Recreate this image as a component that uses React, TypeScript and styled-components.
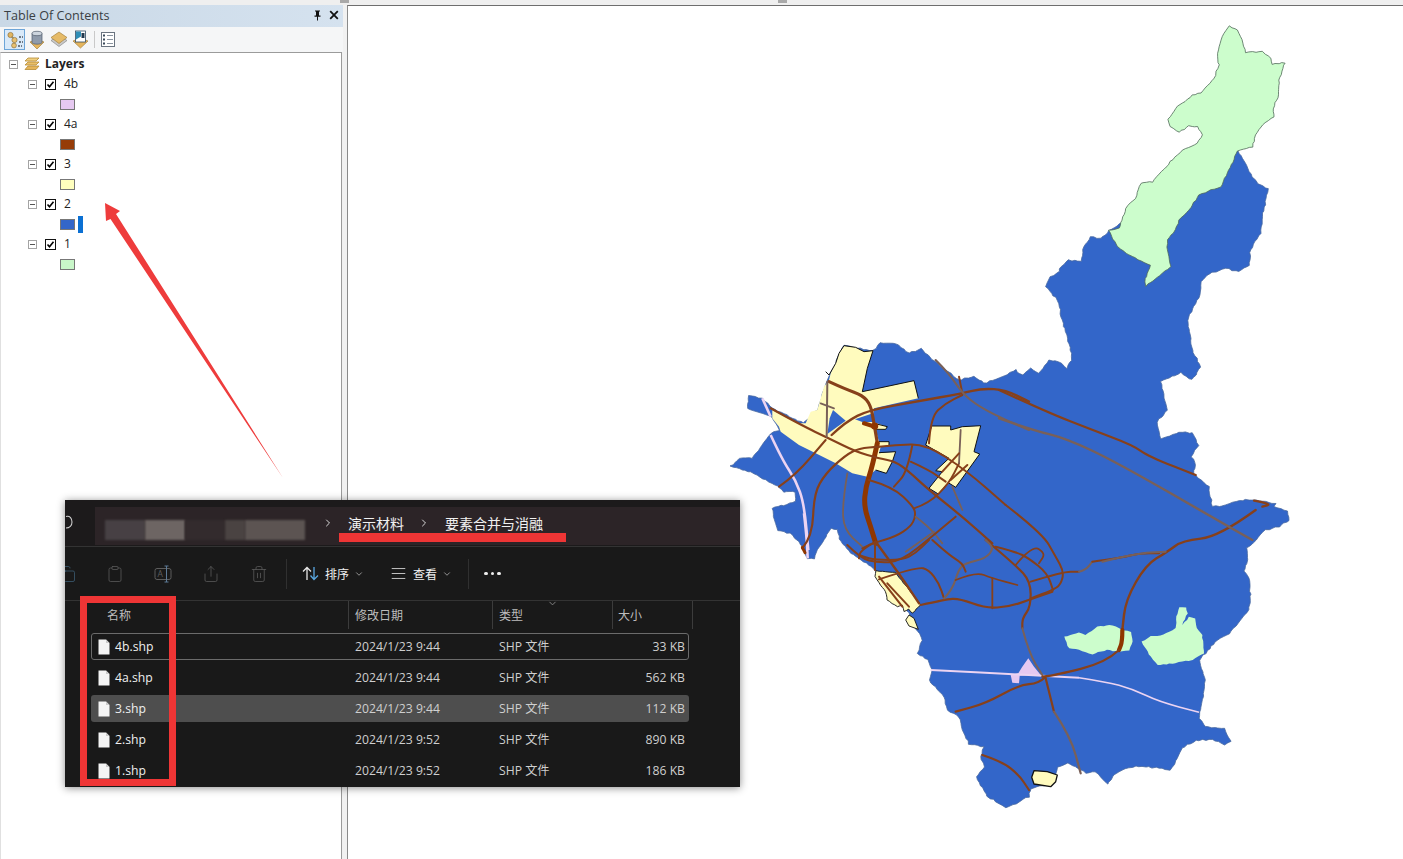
import React from "react";
import styled, { createGlobalStyle } from "styled-components";
import { Clipboard, Trash2, AlignJustify, ChevronDown, ChevronRight, Share, Copy } from "lucide-react";

const Global = createGlobalStyle`
  html, body { margin: 0; padding: 0; background: #f0f0f0; overflow: hidden; }
  #root { width: 1403px; height: 859px; }
`;

const CJK = `"Open Sans", "Noto Sans CJK SC", sans-serif`;

const Page = styled.div`
  position: relative;
  width: 1403px;
  height: 859px;
  overflow: hidden;
  display: flex;
  flex-direction: column;
  background: #f0f0f0;
  font-family: ${CJK};
`;
const TopStrip = styled.div`
  height: 5px;
  flex: none;
  background: #efefef;
  display: flex;
  padding-left: 340px;
  gap: 429px;
`;
const Gripper = styled.div`
  width: 9px;
  height: 3px;
  background: #a9a9a9;
`;
const Main = styled.div`
  flex: 1;
  display: flex;
  min-height: 0;
`;
const Sidebar = styled.aside`
  width: 343px;
  flex: none;
  display: flex;
  flex-direction: column;
`;
const Splitter = styled.div`
  width: 4px;
  flex: none;
  background: #f1f1f1;
`;
const TitleBar = styled.div`
  height: 22px;
  box-sizing: border-box;
  flex: none;
  display: flex;
  align-items: center;
  padding: 0 3px 2px 4px;
  background: linear-gradient(90deg, #c9d8e6, #d5e2ef);
  color: #3a3f44;
  font: 12.6px "Open Sans", sans-serif;
`;
const TitleText = styled.span`
  flex: 1;
`;
const TitleIcons = styled.span`
  display: flex;
  align-items: center;
  gap: 7px;
  margin-right: 1px;
`;
const ToolRow = styled.div`
  height: 25px;
  flex: none;
  display: flex;
  align-items: center;
  padding-left: 4px;
  gap: 1px;
  background: #f5f6f7;
`;
const ToolButton = styled.button<{ $on?: boolean }>`
  width: 21px;
  height: 21px;
  padding: 0;
  display: flex;
  align-items: center;
  justify-content: center;
  border: 1px solid ${(p) => (p.$on ? "#6da5d8" : "transparent")};
  background: ${(p) => (p.$on ? "#d9e9f8" : "transparent")};
`;
const ToolSep = styled.div`
  width: 1px;
  height: 17px;
  background: #c9c9c9;
  margin: 0 1px 0 2px;
`;
const Tree = styled.div`
  flex: 1;
  background: #fff;
  border: 1px solid #9b9b9b;
  border-left: 1px solid #e0e0e0;
  border-bottom: none;
  margin-right: 1px;
  padding-top: 1px;
`;
const TreeRow = styled.div<{ $indent: number }>`
  height: 20px;
  display: flex;
  align-items: center;
  padding-left: ${(p) => p.$indent}px;
  color: #222;
  font: 12px "Open Sans", sans-serif;
`;
const Expander = styled.span`
  width: 9px;
  height: 9px;
  box-sizing: border-box;
  border: 1px solid #a4a4a4;
  position: relative;
  flex: none;
  &::after {
    content: "";
    position: absolute;
    left: 1px;
    right: 1px;
    top: 3px;
    height: 1px;
    background: #555;
  }
`;
const LayerGlyph = styled.span`
  display: flex;
  margin-left: 6px;
`;
const Bold = styled.span`
  font-weight: 700;
  margin-left: 5px;
  position: relative;
  top: -1px;
`;
const LayerName = styled.span`
  margin-left: 8px;
  position: relative;
  top: -1px;
`;
const Check = styled.span`
  margin-left: 8px;
  width: 11px;
  height: 11px;
  box-sizing: border-box;
  border: 1px solid #111;
  display: flex;
  background: #fff;
  flex: none;
`;
const Swatch = styled.span<{ $c: string }>`
  width: 15px;
  height: 11px;
  box-sizing: border-box;
  background: ${(p) => p.$c};
  border: 1px solid #777;
  flex: none;
`;
const Caret = styled.span`
  width: 5px;
  height: 17px;
  margin-left: 3px;
  background: #0b70d3;
`;

const MapCanvas = styled.main`
  flex: 1;
  min-width: 0;
  background: #fff;
  border-left: 1px solid #8a8a8a;
  border-top: 1px solid #6e6e6e;
`;
const MapSvg = styled.svg`
  display: block;
`;

const Overlay = styled.svg`
  position: absolute;
  left: 0;
  top: 0;
  pointer-events: none;
`;

const Explorer = styled.section`
  position: absolute;
  left: 65px;
  top: 500px;
  width: 675px;
  height: 287px;
  background: #191919;
  box-shadow: 0 1px 8px rgba(0, 0, 0, 0.45);
  color: #e6e6e6;
  font: 12px ${CJK};
  overflow: hidden;
  display: flex;
  flex-direction: column;
`;
const AddressBar = styled.div`
  height: 47px;
  flex: none;
  display: flex;
  align-items: center;
  border-bottom: 1px solid #333;
  background: #1c1a1b;
  box-sizing: border-box;
`;
const Refresh = styled.div`
  width: 30px;
  flex: none;
  display: flex;
  margin-top: -2px;
`;
const Crumbs = styled.div`
  flex: 1;
  height: 38px;
  margin-top: 6px;
  box-sizing: border-box;
  background: #2c2427;
  display: flex;
  align-items: center;
  padding: 0 0 6px 10px;
  font-size: 14px;
  color: #f1f1f1;
`;
const BlurBlock = styled.div<{ $w: number; $c: string }>`
  width: ${(p) => p.$w}px;
  height: 20px;
  margin-top: 14px;
  background: ${(p) => p.$c};
  filter: blur(0.8px);
  flex: none;
`;
const CrumbSep = styled.span<{ $l: number; $r: number }>`
  display: flex;
  margin: 0 ${(p) => p.$r}px 0 ${(p) => p.$l}px;
  color: #d8d8d8;
`;
const Toolbar = styled.div`
  height: 54px;
  flex: none;
  display: flex;
  align-items: center;
  border-bottom: 1px solid #333;
  box-sizing: border-box;
  margin-left: -22px;
  color: #f0f0f0;
`;
const IconSlot = styled.div`
  width: 48px;
  flex: none;
  display: flex;
  justify-content: center;
  color: #5d5d5d;
`;
const VSep = styled.div<{ $l: number; $r: number }>`
  width: 1px;
  height: 30px;
  background: #303030;
  margin: 0 ${(p) => p.$r}px 0 ${(p) => p.$l}px;
`;
const ToolAction = styled.div<{ $l?: number }>`
  display: flex;
  align-items: center;
  flex: none;
  gap: 6px;
  font-size: 12px;
  margin-left: ${(p) => p.$l ?? 0}px;
`;
const SmallChevron = styled.span`
  display: flex;
  color: #aaa;
  margin-left: -1px;
`;
const Dots = styled.div`
  display: flex;
  gap: 3px;
  margin-left: 15px;
`;
const Dot = styled.i`
  width: 3.5px;
  height: 3.5px;
  background: #eee;
  border-radius: 50%;
`;
const HeaderRow = styled.div`
  height: 32px;
  flex: none;
  display: grid;
  grid-template-columns: 284px 144px 120px 80px;
  color: #bdbdbd;
  position: relative;
`;
const HeadCell = styled.div<{ $pl: number }>`
  padding-left: ${(p) => p.$pl}px;
  border-right: 1px solid #3c3c3c;
  margin-bottom: 4px;
  display: flex;
  align-items: center;
`;
const SortMark = styled.span`
  position: absolute;
  left: 482px;
  top: -3px;
  display: flex;
  color: #888;
`;
const Rows = styled.div`
  margin-left: 26px;
  width: 598px;
`;
const Row = styled.div<{ $state?: "focus" | "hi" }>`
  height: 27px;
  margin-bottom: 4px;
  border-radius: 3px;
  box-sizing: border-box;
  display: grid;
  grid-template-columns: 23px 240px 144px 1fr 60px;
  align-items: center;
  font-size: 12.2px;
  line-height: 16px;
  background: ${(p) => (p.$state === "hi" ? "#4e4e4e" : "transparent")};
  border: 1px solid ${(p) => (p.$state === "focus" ? "#6b6b6b" : "transparent")};
`;
const FileCell = styled.span`
  display: flex;
  justify-content: center;
`;
const NameCell = styled.span`
  color: #f0f0f0;
`;
const InfoCell = styled.span`
  color: #cfcfcf;
`;
const SizeCell = styled.span`
  color: #cfcfcf;
  text-align: right;
  padding-right: 3px;
`;
const RedBox = styled.div`
  position: absolute;
  left: 15px;
  top: 96px;
  width: 96px;
  height: 190px;
  box-sizing: border-box;
  border: 7px solid #ee3535;
`;
const RedLine = styled.div`
  position: absolute;
  left: 274px;
  top: 33px;
  width: 227px;
  height: 9px;
  background: #ee3535;
`;

/* ---------- map geometry ---------- */
type Pt = [number, number];
const Z5: Pt = [730, 330];
const Z6: Pt = [860, 540];
const Z7: Pt = [1030, 20];
const Z8: Pt = [1000, 350];
const Z9: Pt = [725, 470];
const Z10: Pt = [980, 510];

const pts = (o: Pt, s: string): Pt[] =>
  s
    .trim()
    .split(/\s+/)
    .map((p) => {
      const [x, y] = p.split(",").map(Number);
      return [o[0] + x / 3, o[1] + y / 3] as Pt;
    });

const hash = (n: number) => {
  const v = Math.sin(n * 127.1) * 43758.5453;
  return v - Math.floor(v) - 0.5;
};

const rough = (list: Pt[], amp = 1.5): Pt[] => {
  const out: Pt[] = [];
  let k = 1;
  list.forEach((a, i) => {
    const b = list[(i + 1) % list.length];
    const d = Math.hypot(b[0] - a[0], b[1] - a[1]);
    const n = Math.max(1, Math.round(d / 3.2));
    for (let j = 0; j < n; j++) {
      const t = j / n;
      k++;
      out.push([
        a[0] + (b[0] - a[0]) * t + hash(k) * amp,
        a[1] + (b[1] - a[1]) * t + hash(k + 991) * amp,
      ]);
    }
  });
  return out;
};

const poly = (l: Pt[]) =>
  "M" + l.map((p) => `${p[0].toFixed(1)} ${p[1].toFixed(1)}`).join("L") + "Z";

const smooth = (l: Pt[]) => {
  if (l.length < 3) return "M" + l.map((p) => p.join(" ")).join("L");
  let d = `M${l[0][0]} ${l[0][1]}`;
  for (let i = 1; i < l.length - 1; i++) {
    const mx = (l[i][0] + l[i + 1][0]) / 2;
    const my = (l[i][1] + l[i + 1][1]) / 2;
    d += `Q${l[i][0]} ${l[i][1]} ${mx} ${my}`;
  }
  const e = l[l.length - 1];
  return d + `L${e[0]} ${e[1]}`;
};

const BLUE_OUTLINE: Pt[] = [
  ...pts(Z7, "625,392 650,430 670,470 685,490 717,507 710,545 702,580 695,640 665,690 660,735 630,755 590,745 540,760 515,785 515,815 500,850 475,900"),
  ...pts(Z8, "580,0 605,50 580,90 545,68 485,95 505,180 475,215 485,265 550,245 580,250 600,285 578,320 590,345 582,370 630,410 640,470 680,465 720,450 770,450 830,460 825,470 865,485 870,510"),
  ...pts(Z10, "900,50 860,60 830,90 805,115 805,150 795,185 810,205 815,260 810,300 790,325 750,370 710,395 680,430 660,450 678,510 675,550 665,590 662,625 680,650 735,655 755,693 735,703 700,690 650,690 610,715 595,745 575,780"),
  ...pts(Z6, "900,685 860,680 820,680 780,695 760,710 745,733 710,695 680,700 650,680 625,670 595,680 590,700 565,735 515,745 510,770 470,790 440,803 420,790 385,770 370,745 352,712 375,680 365,650 375,620 330,612 310,570 300,530 265,510 255,470 210,420 220,390 205,360 175,340 190,300 170,265"),
  ...pts(Z9, "555,430 450,295 380,250 350,215 340,180 320,175 290,225 270,265 250,265 235,230 200,190 160,180 150,150 145,115 215,95 215,65 180,65 160,50 90,10"),
  ...pts(Z5, "5,408 30,385 70,385 100,345 125,310 150,300 130,262 55,235 60,195 100,205 130,235 225,280 265,240 290,165 320,100 330,70 345,47 432,62 455,40 500,40 540,70 575,55 610,90 650,120 690,150 735,140 765,160 810,145"),
  ...pts(Z8, "50,60 70,75 95,55 120,70 150,30 180,35 205,55 218,30 215,0"),
  ...pts(Z7, "100,900 85,840 50,800 65,770 90,755 90,745 120,720 155,725 165,680 185,650 215,655 240,632"),
];

const GREEN_TOP = pts(Z7, "600,18 625,30 640,60 650,97 700,95 725,115 730,133 768,128 750,180 750,225 732,265 735,290 700,315 680,345 670,380 625,392 600,450 575,500 545,510 510,525 480,570 450,600 440,630 415,660 415,690 425,740 400,760 350,798 347,785 365,735 300,705 265,680 240,632 270,625 290,565 320,535 335,490 370,485 410,440 460,390 505,370 520,345 505,320 480,318 450,337 425,320 417,298 440,265 460,250 490,225 515,220 555,175 570,135 565,110 575,60 590,30");
const GREEN_A = pts(Z10, "255,380 300,368 320,375 355,350 400,345 430,360 455,365 462,395 450,420 420,425 385,420 340,432 300,420 270,415");
const GREEN_B = pts(Z10, "487,395 515,378 545,378 590,355 592,320 600,292 622,292 625,310 610,345 630,320 648,325 655,355 670,375 675,430 640,450 580,460 535,465 515,440");

const YELLOW_MAIN = pts(Z5, "130,240 205,280 230,280 245,245 265,240 285,170 300,150 305,130 320,100 330,70 345,47 380,52 405,65 432,62 415,115 400,185 555,152 568,205 435,235 430,275 475,290 470,298 440,300 450,335 480,335 480,345 455,350 450,370 500,365 490,395 472,430 440,420 415,440 370,430 320,400 260,370 210,345 155,305 150,290 130,265");
const BLUE_HOLES = [
  pts(Z5, "312,240 350,272 295,312 302,265"),
  pts(Z5, "378,268 432,250 434,276 400,276"),
];
const YELLOW_EAST = pts(Z5, "608,288 665,288 665,300 700,290 755,287 735,365 752,372 680,472 658,458 628,492 600,475 640,425 620,422 660,385 590,345");
const YELLOW_SOUTH = pts(Z6, "50,92 110,98 185,195 160,220 150,208 135,215 130,195 115,200 100,190 85,180 80,155 65,135 48,110");
const YELLOW_SLIVER = pts(Z6, "150,225 165,235 178,268 150,258 140,240");
const YELLOW_ISLE = pts(Z6, "525,692 565,695 595,705 590,725 575,740 525,732 518,712");
const BLACK_EDGES = [
  pts(Z5, "290,125 300,135 320,100 330,70 345,47 380,52 405,65 432,62 415,115 400,185 555,152 568,205"),
  pts(Z5, "435,280 475,290 470,298 440,298"),
  pts(Z5, "450,335 480,335 480,345"),
  pts(Z5, "450,368 500,365 490,395 472,430 440,420"),
];
const PINK_BLOCK = pts(Z10, "118,490 130,470 148,445 165,470 185,495 122,497 120,520 100,518 95,495");
const PINK_LINES: [number, Pt[]][] = [
  [2, pts(Z10, "-145,480 -80,483 60,490 185,497 300,503")],
  [1.6, pts(Z10, "300,503 380,515 460,537 540,575 660,607")],
  [2.6, pts(Z5, "100,205 125,260")],
  [2.6, pts(Z5, "125,315 160,390 200,450 225,520 238,660")],
  [2.6, pts(Z9, "240,130 248,200 251,265")],
];

const B = "#87401a";
const G = "#796058";
const D = "#8f3600";
const ROADS: [Pt, number, string, string][] = [
  [Z5, 3.2, B, "300,155 350,178 400,195 425,225 435,280 445,340"],
  [Z5, 5, D, "445,340 430,410 410,470 405,530 425,590 440,640"],
  [Z5, 4.2, D, "405,280 438,290"],
  [Z5, 2.2, B, "125,235 215,285 300,325 380,365 450,385 500,395 540,425 600,480 700,560 790,640"],
  [Z6, 2.2, B, "380,0 470,75 515,125 515,200 490,235 490,265"],
  [Z5, 2, G, "295,155 293,320"],
  [Z5, 1.8, G, "275,220 315,235"],
  [Z5, 2.4, B, "308,315 350,275 420,240 560,215 700,190 760,175 830,180 900,215"],
  [Z5, 2, B, "690,140 700,190"],
  [Z5, 2, G, "620,90 660,130 700,190 750,230 830,270 900,300"],
  [Z5, 2, B, "600,340 605,260 650,220 700,195"],
  [Z5, 2, B, "450,350 500,345 590,342 710,420 830,525"],
  [Z10, 2, B, "80,-15 190,70 230,140 255,185 245,225 220,240 155,265"],
  [Z5, 2, B, "150,470 200,435 290,330"],
  [Z5, 2.2, B, "220,655 250,620 255,490 290,430 350,375 390,355 450,350"],
  [Z5, 1.8, G, "355,430 340,520 345,600 400,650"],
  [Z5, 2, B, "420,450 490,470 555,530 560,560 545,590 500,620 430,640 400,655"],
  [Z5, 2, B, "555,535 600,520 660,460 690,400"],
  [Z5, 1.8, G, "690,400 695,300"],
  [Z5, 1.8, G, "670,470 700,540"],
  [Z5, 2, B, "550,345 535,425 495,470"],
  [Z5, 2, B, "545,395 600,420 650,455"],
  [Z5, 2, B, "640,425 690,370"],
  [Z5, 2, B, "665,450 715,405"],
  [Z5, 1.8, G, "560,560 600,590 640,640"],
  [Z6, 2, B, "0,45 10,50 50,60 130,60 170,40 210,0"],
  [Z6, 2, B, "48,5 48,90"],
  [Z6, 2.4, B, "50,5 120,100 180,190"],
  [Z6, 2, B, "60,118 175,80 210,90 240,130 255,175"],
  [Z6, 2, B, "60,110 130,200"],
  [Z6, 2, B, "85,130 150,200"],
  [Z6, 2.2, B, "185,195 260,178 300,175 380,205 450,200 510,180 580,155"],
  [Z6, 2, G, "255,175 280,150 300,85 320,70 380,55 405,25 380,0"],
  [Z6, 2, B, "220,0 270,45 310,70 320,95"],
  [Z10, 2, B, "50,110 110,125 150,145 205,190 222,240"],
  [Z6, 2, G, "490,265 510,340 550,405"],
  [Z6, 1.8, B, "290,120 350,95 400,115 475,135"],
  [Z6, 1.8, B, "400,115 400,205"],
  [Z6, 1.8, B, "470,75 520,15 560,40 540,70"],
  [Z6, 2, B, "515,125 610,95 660,95"],
  [Z6, 2, G, "660,95 680,90 700,65"],
  [Z6, 2, B, "700,65 780,55 840,40 900,40"],
  [Z6, 2.2, B, "560,410 540,430 480,435 380,490 290,515"],
  [Z6, 2.2, B, "560,415 585,515"],
  [Z6, 2.2, G, "585,515 635,590 665,700"],
  [Z6, 2.2, B, "370,645 430,665 480,705 510,750"],
  [Z10, 2.4, B, "830,0 720,80 610,92 565,125 500,165 440,270 430,360"],
  [Z10, 4.2, D, "430,360 430,395 420,420"],
  [Z10, 2.2, B, "420,420 380,458 230,495 190,500"],
  [Z10, 2, G, "370,155 470,130 560,125"],
  [Z8, 2.2, B, "0,120 140,185 280,240 400,285 450,320 590,375"],
  [Z8, 2.4, G, "0,205 100,240 200,265 350,335 680,525 760,570"],
  [Z8, 2.2, B, "765,452 820,462 790,470"],
  [Z9, 1.8, G, "545,245 630,185"],
  [Z9, 2, B, "455,215 410,240 405,265"],
  [Z9, 2, B, "370,225 410,265 460,278 530,275 630,195 695,140"],
  [Z9, 3, D, "235,232 243,248"],
];

const MapDrawing = () => (
  <MapSvg width={1054} height={853} viewBox="349 6 1054 853">
    <path d={poly(rough(BLUE_OUTLINE, 1.4))} fill="#3366c9" stroke="#48689f" strokeWidth={0.8} />
    <path d={poly(rough(GREEN_TOP, 1.1))} fill="#ccfdcc" stroke="#4f6a58" strokeWidth={0.8} />
    <path d={poly(rough(GREEN_A, 1))} fill="#ccfdcc" />
    <path d={poly(rough(GREEN_B, 1))} fill="#ccfdcc" />
    <path d={poly(YELLOW_MAIN)} fill="#fffbbe" />
    {BLUE_HOLES.map((h, i) => (
      <path key={i} d={poly(h)} fill="#3366c9" />
    ))}
    {BLACK_EDGES.map((e, i) => (
      <path key={i} d={"M" + e.map((p) => p.join(" ")).join("L")} fill="none" stroke="#111" strokeWidth={1} />
    ))}
    <path d={poly(YELLOW_EAST)} fill="#fffbbe" stroke="#111" strokeWidth={1} />
    <path d={poly(rough(YELLOW_SOUTH, 0.7))} fill="#fffbbe" stroke="#111" strokeWidth={0.9} />
    <path d={poly(YELLOW_SLIVER)} fill="#fffbbe" stroke="#111" strokeWidth={0.9} />
    <path d={poly(YELLOW_ISLE)} fill="#fffbbe" stroke="#111" strokeWidth={1.3} strokeLinejoin="round" />
    <path d={poly(PINK_BLOCK)} fill="#e6c9f1" />
    {PINK_LINES.map(([w, l], i) => (
      <path key={i} d={smooth(l)} fill="none" stroke="#ecd4f2" strokeWidth={w} />
    ))}
    {ROADS.map(([o, w, c, s], i) => (
      <path key={i} d={smooth(pts(o, s))} fill="none" stroke={c} strokeWidth={w} strokeLinecap="round" strokeLinejoin="round" />
    ))}
    <circle cx={730 + 437 / 3} cy={330 + 288 / 3} r={3.6} fill={D} />
  </MapSvg>
);

/* ---------- icons ---------- */
const PinIcon = () => (
  <svg width="9" height="11" viewBox="0 0 9 11">
    <path d="M2 0.5h5v1H6v4h1.5v1.2H5V10.5H4V6.7H1.5V5.5H3v-4H2z" fill="#111" />
  </svg>
);
const CloseIcon = () => (
  <svg width="10" height="10" viewBox="0 0 10 10">
    <path d="M1.2 1.2l7.6 7.6M8.8 1.2L1.2 8.8" stroke="#111" strokeWidth="1.8" />
  </svg>
);
const DrawOrderIcon = () => (
  <svg width="18" height="18" viewBox="0 0 18 18">
    <circle cx="4.5" cy="4" r="2.6" fill="#e2b560" stroke="#8f7440" strokeWidth=".7" />
    <circle cx="8.5" cy="9" r="2.6" fill="#e8c070" stroke="#8f7440" strokeWidth=".7" />
    <circle cx="8" cy="14.5" r="2.4" fill="#e8c070" stroke="#8f7440" strokeWidth=".7" />
    <path d="M5 6l3 1M8 11.5v1" stroke="#9a8a60" strokeWidth="1" />
    <path d="M13 6h4M13 11h4M12 15h4" stroke="#4c5560" strokeWidth="1.4" strokeDasharray="2 1" />
  </svg>
);
const SourceIcon = () => (
  <svg width="16" height="20" viewBox="0 0 16 20">
    <path d="M1 12l7 7 7-7-7-3z" fill="#e6b55c" stroke="#a5823f" strokeWidth=".7" />
    <path d="M3 3.5v9c0 2.2 10 2.2 10 0v-9z" fill="#8f9bab" stroke="#4f5a6a" strokeWidth=".7" />
    <ellipse cx="8" cy="3.5" rx="5" ry="2.2" fill="#cdd5de" stroke="#4f5a6a" strokeWidth=".7" />
  </svg>
);
const VisibleIcon = () => (
  <svg width="18" height="17" viewBox="0 0 18 17">
    <path d="M1 9.5l8-5 8 5-8 6z" fill="#c9c9c9" stroke="#8b8b8b" strokeWidth=".7" />
    <path d="M1 6.5l8-5.5 8 5.5-8 6z" fill="#e6bb68" stroke="#a5823f" strokeWidth=".7" />
  </svg>
);
const SelectionIcon = () => (
  <svg width="17" height="19" viewBox="0 0 17 19">
    <path d="M1 11l7.500 7 7.500-7-7.500-3z" fill="#e6b55c" stroke="#a5823f" strokeWidth=".7" />
    <rect x="3.500" y="1" width="10" height="11" fill="#fff" stroke="#2f4a63" strokeWidth=".8" />
    <path d="M4 1.500h5v5l-5 3z" fill="#2f8fb8" />
    <path d="M9.500 3h3v5h-3z" fill="#21384f" />
  </svg>
);
const OptionsIcon = () => (
  <svg width="14" height="15" viewBox="0 0 14 15">
    <rect x=".5" y=".5" width="13" height="14" fill="#fff" stroke="#6a7480" />
    <path d="M6 3.500h6M6 7.500h6M6 11.500h6" stroke="#8a94a0" strokeWidth="1" />
    <path d="M2 2.500h2v2H2zM2 6.500h2v2H2zM2 10.500h2v2H2z" fill="#3a4a5a" />
  </svg>
);
const LayersIcon = () => (
  <svg width="16" height="14" viewBox="0 0 16 14">
    <path d="M4 1h11l-3 3H1z" fill="#f0d080" stroke="#b58a35" strokeWidth=".8" />
    <path d="M4 5h11l-3 3H1z" fill="#eac06a" stroke="#b58a35" strokeWidth=".8" />
    <path d="M4 9h11l-3 3.500H1z" fill="#e5b55a" stroke="#b58a35" strokeWidth=".8" />
  </svg>
);
const CheckMark = () => (
  <svg width="9" height="9" viewBox="0 0 9 9">
    <path d="M1.500 4.500l2 2.200 4-5" fill="none" stroke="#000" strokeWidth="1.600" />
  </svg>
);
const FileIcon = () => (
  <svg width="12" height="16" viewBox="0 0 12 16">
    <path d="M0.500 0.500h7.500l3.500 3.500v11.500H0.500z" fill="#f4f4f4" />
    <path d="M8 0.500v3.500h3.500" fill="#c9c9c9" />
  </svg>
);
const RenameIcon = () => (
  <svg width="18" height="18" viewBox="0 0 18 18" fill="none" stroke="#5d5d5d">
    <rect x="1" y="3.500" width="16" height="11" rx="2" />
    <path d="M12.500 1v16M10.500 1h4M10.500 17h4" stroke="#5d7a96" />
    <text x="3.500" y="12" fontSize="8.500" fill="#5d5d5d" stroke="none" fontFamily="Open Sans">A</text>
  </svg>
);
const SortIcon = () => (
  <svg width="17" height="15" viewBox="0 0 17 15" fill="none" strokeWidth="1.300">
    <path d="M5 14V1.500M1 5.500l4-4 4 4" stroke="#e8e8e8" />
    <path d="M12 1v12.500M8.500 9.500l3.500 4 4-4" stroke="#5aa7e0" />
  </svg>
);
const RefreshIcon = () => (
  <svg width="8" height="14" viewBox="0 0 8 14" fill="none">
    <path d="M1 1.500c4 -1 6 2 6 5.500s-2.500 6 -6 6" stroke="#cfcfcf" strokeWidth="1.100" />
  </svg>
);

const LAYERS = [
  { name: "4b", color: "#e6c9f1" },
  { name: "4a", color: "#963c08" },
  { name: "3", color: "#ffffbe" },
  { name: "2", color: "#3366c9", caret: true },
  { name: "1", color: "#c9f7c9" },
];

const FILES: { name: string; date: string; size: string; state?: "focus" | "hi" }[] = [
  { name: "4b.shp", date: "2024/1/23 9:44", size: "33 KB", state: "focus" },
  { name: "4a.shp", date: "2024/1/23 9:44", size: "562 KB" },
  { name: "3.shp", date: "2024/1/23 9:44", size: "112 KB", state: "hi" },
  { name: "2.shp", date: "2024/1/23 9:52", size: "890 KB" },
  { name: "1.shp", date: "2024/1/23 9:52", size: "186 KB" },
];

export default function App() {
  return (
    <Page>
      <Global />
      <TopStrip>
        <Gripper />
        <Gripper />
      </TopStrip>
      <Main>
        <Sidebar>
          <TitleBar>
            <TitleText>Table Of Contents</TitleText>
            <TitleIcons>
              <PinIcon />
              <CloseIcon />
            </TitleIcons>
          </TitleBar>
          <ToolRow>
            <ToolButton $on><DrawOrderIcon /></ToolButton>
            <ToolButton><SourceIcon /></ToolButton>
            <ToolButton><VisibleIcon /></ToolButton>
            <ToolButton><SelectionIcon /></ToolButton>
            <ToolSep />
            <ToolButton><OptionsIcon /></ToolButton>
          </ToolRow>
          <Tree>
            <TreeRow $indent={8}>
              <Expander />
              <LayerGlyph><LayersIcon /></LayerGlyph>
              <Bold>Layers</Bold>
            </TreeRow>
            {LAYERS.map((l) => (
              <React.Fragment key={l.name}>
                <TreeRow $indent={27}>
                  <Expander />
                  <Check><CheckMark /></Check>
                  <LayerName>{l.name}</LayerName>
                </TreeRow>
                <TreeRow $indent={59}>
                  <Swatch $c={l.color} />
                  {l.caret && <Caret />}
                </TreeRow>
              </React.Fragment>
            ))}
          </Tree>
        </Sidebar>
        <Splitter />
        <MapCanvas>
          <MapDrawing />
        </MapCanvas>
      </Main>

      <Overlay width={1403} height={859}>
        <polygon points="105,203 120,211 116,214 283,478 110.500,219 106,221" fill="#ee3c3c" />
      </Overlay>

      <Explorer>
        <AddressBar>
          <Refresh><RefreshIcon /></Refresh>
          <Crumbs>
            <BlurBlock $w={40} $c="#474044" />
            <BlurBlock $w={40} $c="#6d6563" />
            <BlurBlock $w={40} $c="#332b2d" />
            <BlurBlock $w={20} $c="#4a4342" />
            <BlurBlock $w={60} $c="#5c5452" />
            <CrumbSep $l={17} $r={14}><ChevronRight size={12} /></CrumbSep>
            <span>演示材料</span>
            <CrumbSep $l={14} $r={15}><ChevronRight size={12} /></CrumbSep>
            <span>要素合并与消融</span>
          </Crumbs>
        </AddressBar>
        <Toolbar>
          <IconSlot><Copy size={18} strokeWidth={1} color="#3d6078" /></IconSlot>
          <IconSlot><Clipboard size={18} strokeWidth={1} /></IconSlot>
          <IconSlot><RenameIcon /></IconSlot>
          <IconSlot><Share size={18} strokeWidth={1} /></IconSlot>
          <IconSlot><Trash2 size={18} strokeWidth={1} /></IconSlot>
          <VSep $l={3} $r={15} />
          <ToolAction>
            <SortIcon />
            <span>排序</span>
            <SmallChevron><ChevronDown size={10} /></SmallChevron>
          </ToolAction>
          <ToolAction $l={26}>
            <AlignJustify size={17} strokeWidth={1.1} />
            <span>查看</span>
            <SmallChevron><ChevronDown size={10} /></SmallChevron>
          </ToolAction>
          <VSep $l={16} $r={0} />
          <Dots><Dot /><Dot /><Dot /></Dots>
        </Toolbar>
        <HeaderRow>
          <HeadCell $pl={42}>名称</HeadCell>
          <HeadCell $pl={6}>修改日期</HeadCell>
          <HeadCell $pl={6}>类型</HeadCell>
          <HeadCell $pl={5}>大小</HeadCell>
          <SortMark><ChevronDown size={11} /></SortMark>
        </HeaderRow>
        <Rows>
          {FILES.map((f) => (
            <Row key={f.name} $state={f.state}>
              <FileCell><FileIcon /></FileCell>
              <NameCell>{f.name}</NameCell>
              <InfoCell>{f.date}</InfoCell>
              <InfoCell>SHP 文件</InfoCell>
              <SizeCell>{f.size}</SizeCell>
            </Row>
          ))}
        </Rows>
        <RedBox />
        <RedLine />
      </Explorer>
    </Page>
  );
}
